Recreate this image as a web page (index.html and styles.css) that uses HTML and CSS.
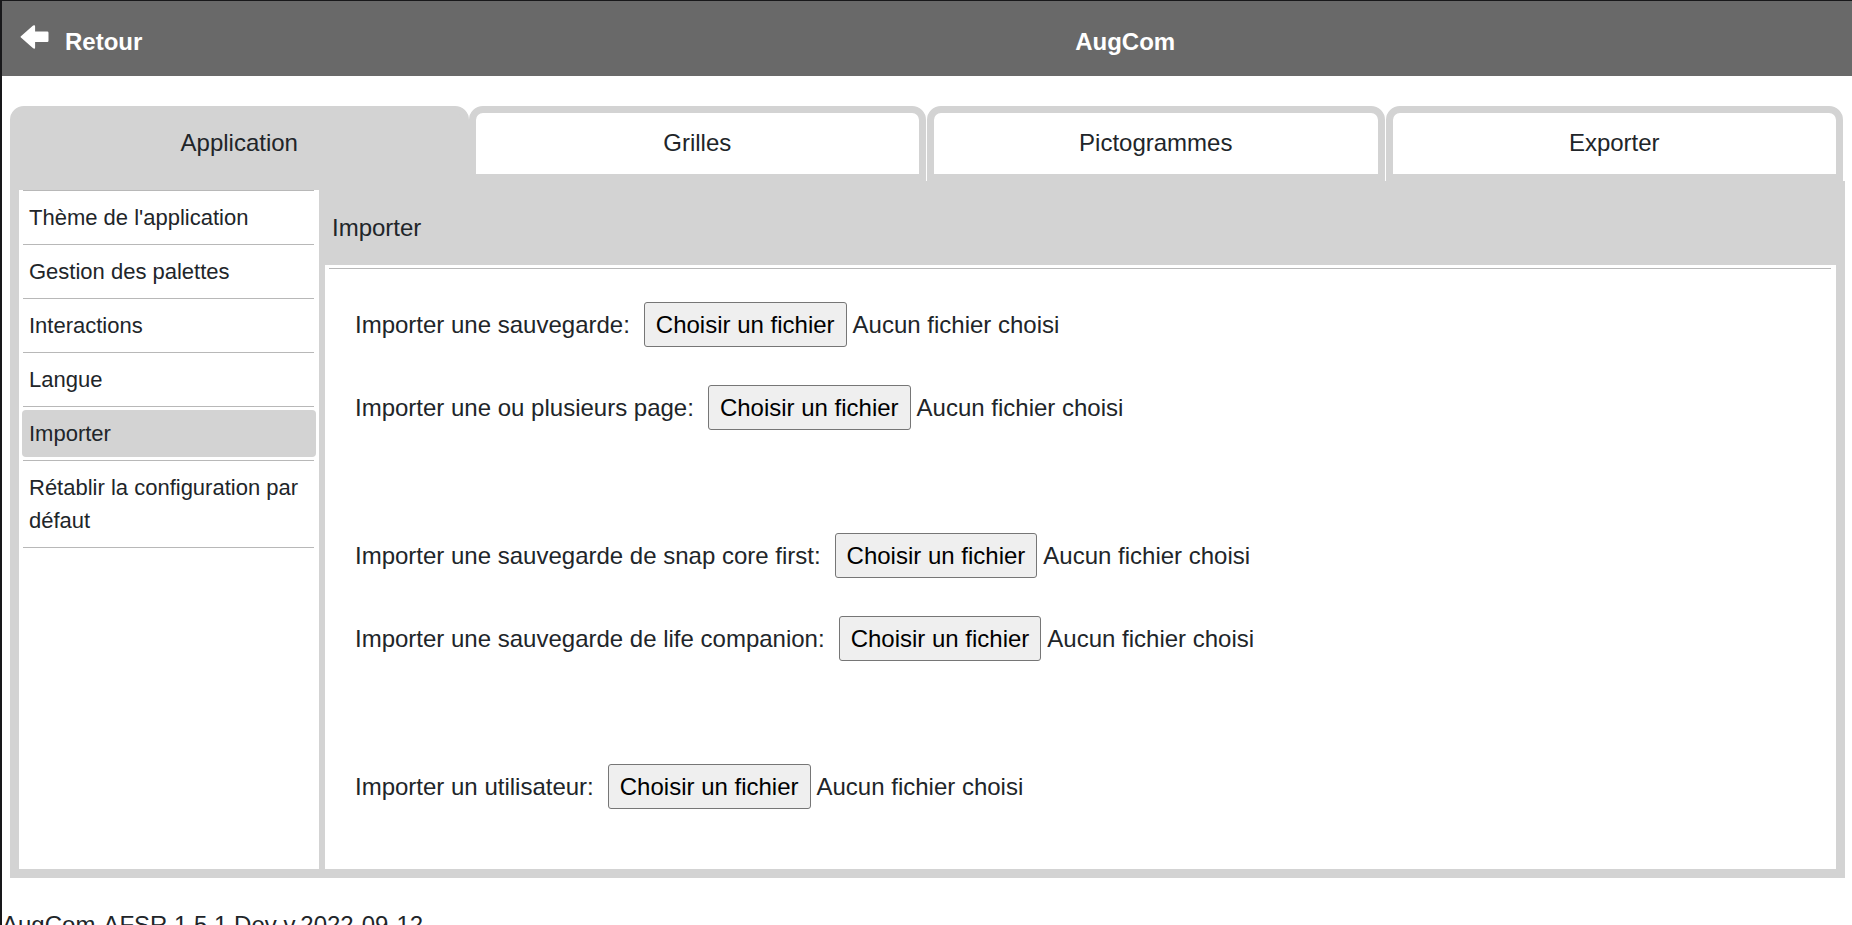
FILE: index.html
```html
<!DOCTYPE html>
<html lang="fr">
<head>
<meta charset="utf-8">
<title>AugCom</title>
<link rel="stylesheet" href="styles.css">
</head>
<body class="page">
<header class="topbar">
  <a class="back" href="#">
    <svg class="back-icon" viewBox="0 0 28 24" aria-hidden="true"><path d="M.4 11.2 12.6.6Q14.6-.6 14.6 1.4V6.6H26.8Q28 6.6 28 7.8V15.8Q28 17 26.8 17H14.6V22.4Q14.6 24.4 12.6 23.2L.4 12.6Q-.3 11.9 .4 11.2Z" fill="#fff"/></svg>
    <span>Retour</span>
  </a>
  <h1 class="brand">AugCom</h1>
</header>
<main class="settings">
  <nav class="tabs">
    <button type="button" class="tab tab-active">Application</button>
    <button type="button" class="tab">Grilles</button>
    <button type="button" class="tab">Pictogrammes</button>
    <button type="button" class="tab">Exporter</button>
  </nav>
  <div class="board">
    <nav class="menu">
      <ul class="menu-list">
        <li class="menu-row"><a class="menu-link" href="#">Thème de l'application</a></li>
        <li class="menu-row"><a class="menu-link" href="#">Gestion des palettes</a></li>
        <li class="menu-row"><a class="menu-link" href="#">Interactions</a></li>
        <li class="menu-row"><a class="menu-link" href="#">Langue</a></li>
        <li class="menu-row"><a class="menu-link menu-link-active" href="#">Importer</a></li>
        <li class="menu-row"><a class="menu-link" href="#">Rétablir la configuration par défaut</a></li>
      </ul>
    </nav>
    <section class="content">
      <h2 class="title">Importer</h2>
      <form class="form">
        <div class="group">
          <div class="field"><label for="save">Importer une sauvegarde:</label><div class="picker"><button type="button" class="choose" id="save">Choisir un fichier</button><span>Aucun fichier choisi</span></div></div>
          <div class="field"><label for="pages">Importer une ou plusieurs page:</label><div class="picker"><button type="button" class="choose" id="pages">Choisir un fichier</button><span>Aucun fichier choisi</span></div></div>
        </div>
        <div class="group">
          <div class="field"><label for="snap">Importer une sauvegarde de snap core first:</label><div class="picker"><button type="button" class="choose" id="snap">Choisir un fichier</button><span>Aucun fichier choisi</span></div></div>
          <div class="field"><label for="life">Importer une sauvegarde de life companion:</label><div class="picker"><button type="button" class="choose" id="life">Choisir un fichier</button><span>Aucun fichier choisi</span></div></div>
        </div>
        <div class="group">
          <div class="field"><label for="user">Importer un utilisateur:</label><div class="picker"><button type="button" class="choose" id="user">Choisir un fichier</button><span>Aucun fichier choisi</span></div></div>
        </div>
      </form>
    </section>
  </div>
</main>
<footer class="version">AugCom-AFSR 1.5.1 Dev v.2022-09-12</footer>
</body>
</html>
```
FILE: styles.css
```css
* { box-sizing: border-box; }

.page {
  margin: 0;
  height: 100vh;
  overflow: hidden;
  border-top: 1px solid #18181a;
  border-left: 2px solid #18181a;
  background: #fff;
  color: #212529;
  font: 24px/36px "Liberation Sans", Arial, sans-serif;
}

.topbar {
  display: grid;
  grid-template-columns: 3fr 11fr;
  padding: 23px 0 16px;
  background: #696969;
  color: #fff;
  font-weight: bold;
}

.back {
  display: flex;
  gap: 16px;
  padding-left: 18px;
  color: inherit;
  text-decoration: none;
}

.back-icon { width: 29px; height: 24px; margin-top: 1px; }

.brand {
  margin: 0;
  font-size: 24px;
  text-align: center;
}

.settings { padding: 30px 7px 0 8px; }

.tabs {
  display: grid;
  grid-template-columns: repeat(4, 1fr);
  gap: 1px;
  padding-right: 2px;
}

.tab {
  padding: 12px 0 13px;
  border: 7px solid #d3d3d3;
  border-radius: 14px 14px 0 0;
  background: #fff;
  color: inherit;
  font: inherit;
}

.tab-active { margin-right: -1px; background: #d3d3d3; }

.board {
  display: grid;
  grid-template-columns: 300px 1fr;
  column-gap: 6px;
  padding: 0 9px 9px;
  background: #d3d3d3;
}

.menu {
  margin-top: 9px;
  padding: 0 3px;
  background: #fff;
  font-size: 22px;
  line-height: 33px;
}

.menu-list { margin: 0; padding: 0; list-style: none; }

.menu-row::after,
.menu-list::before,
.form::before {
  content: "";
  display: block;
  height: 1px;
  margin: 0 2px 0 1px;
  background: #b8b8b8;
}

.menu-link {
  display: block;
  margin: 3px 0;
  padding: 7px;
  border-radius: 4px;
  color: inherit;
  text-decoration: none;
}

.menu-link-active { background: #d3d3d3; }

.title {
  margin: 0;
  padding: 29px 7px 19px;
  font-size: 24px;
  font-weight: normal;
}

.form { padding: 3px 3px 60px; background: #fff; }

.group { display: grid; gap: 38px; padding: 33px 27px 0; }
.group + .group { padding-top: 103px; }

.field { display: flex; align-items: center; gap: 14px; }
.picker { display: flex; align-items: center; gap: 6px; }

.choose {
  padding: 4px 11px 3px;
  border: 1px solid #767676;
  border-radius: 3px;
  background: #efefef;
  color: #000;
  font: inherit;
}

.version { padding-top: 29px; }
```
